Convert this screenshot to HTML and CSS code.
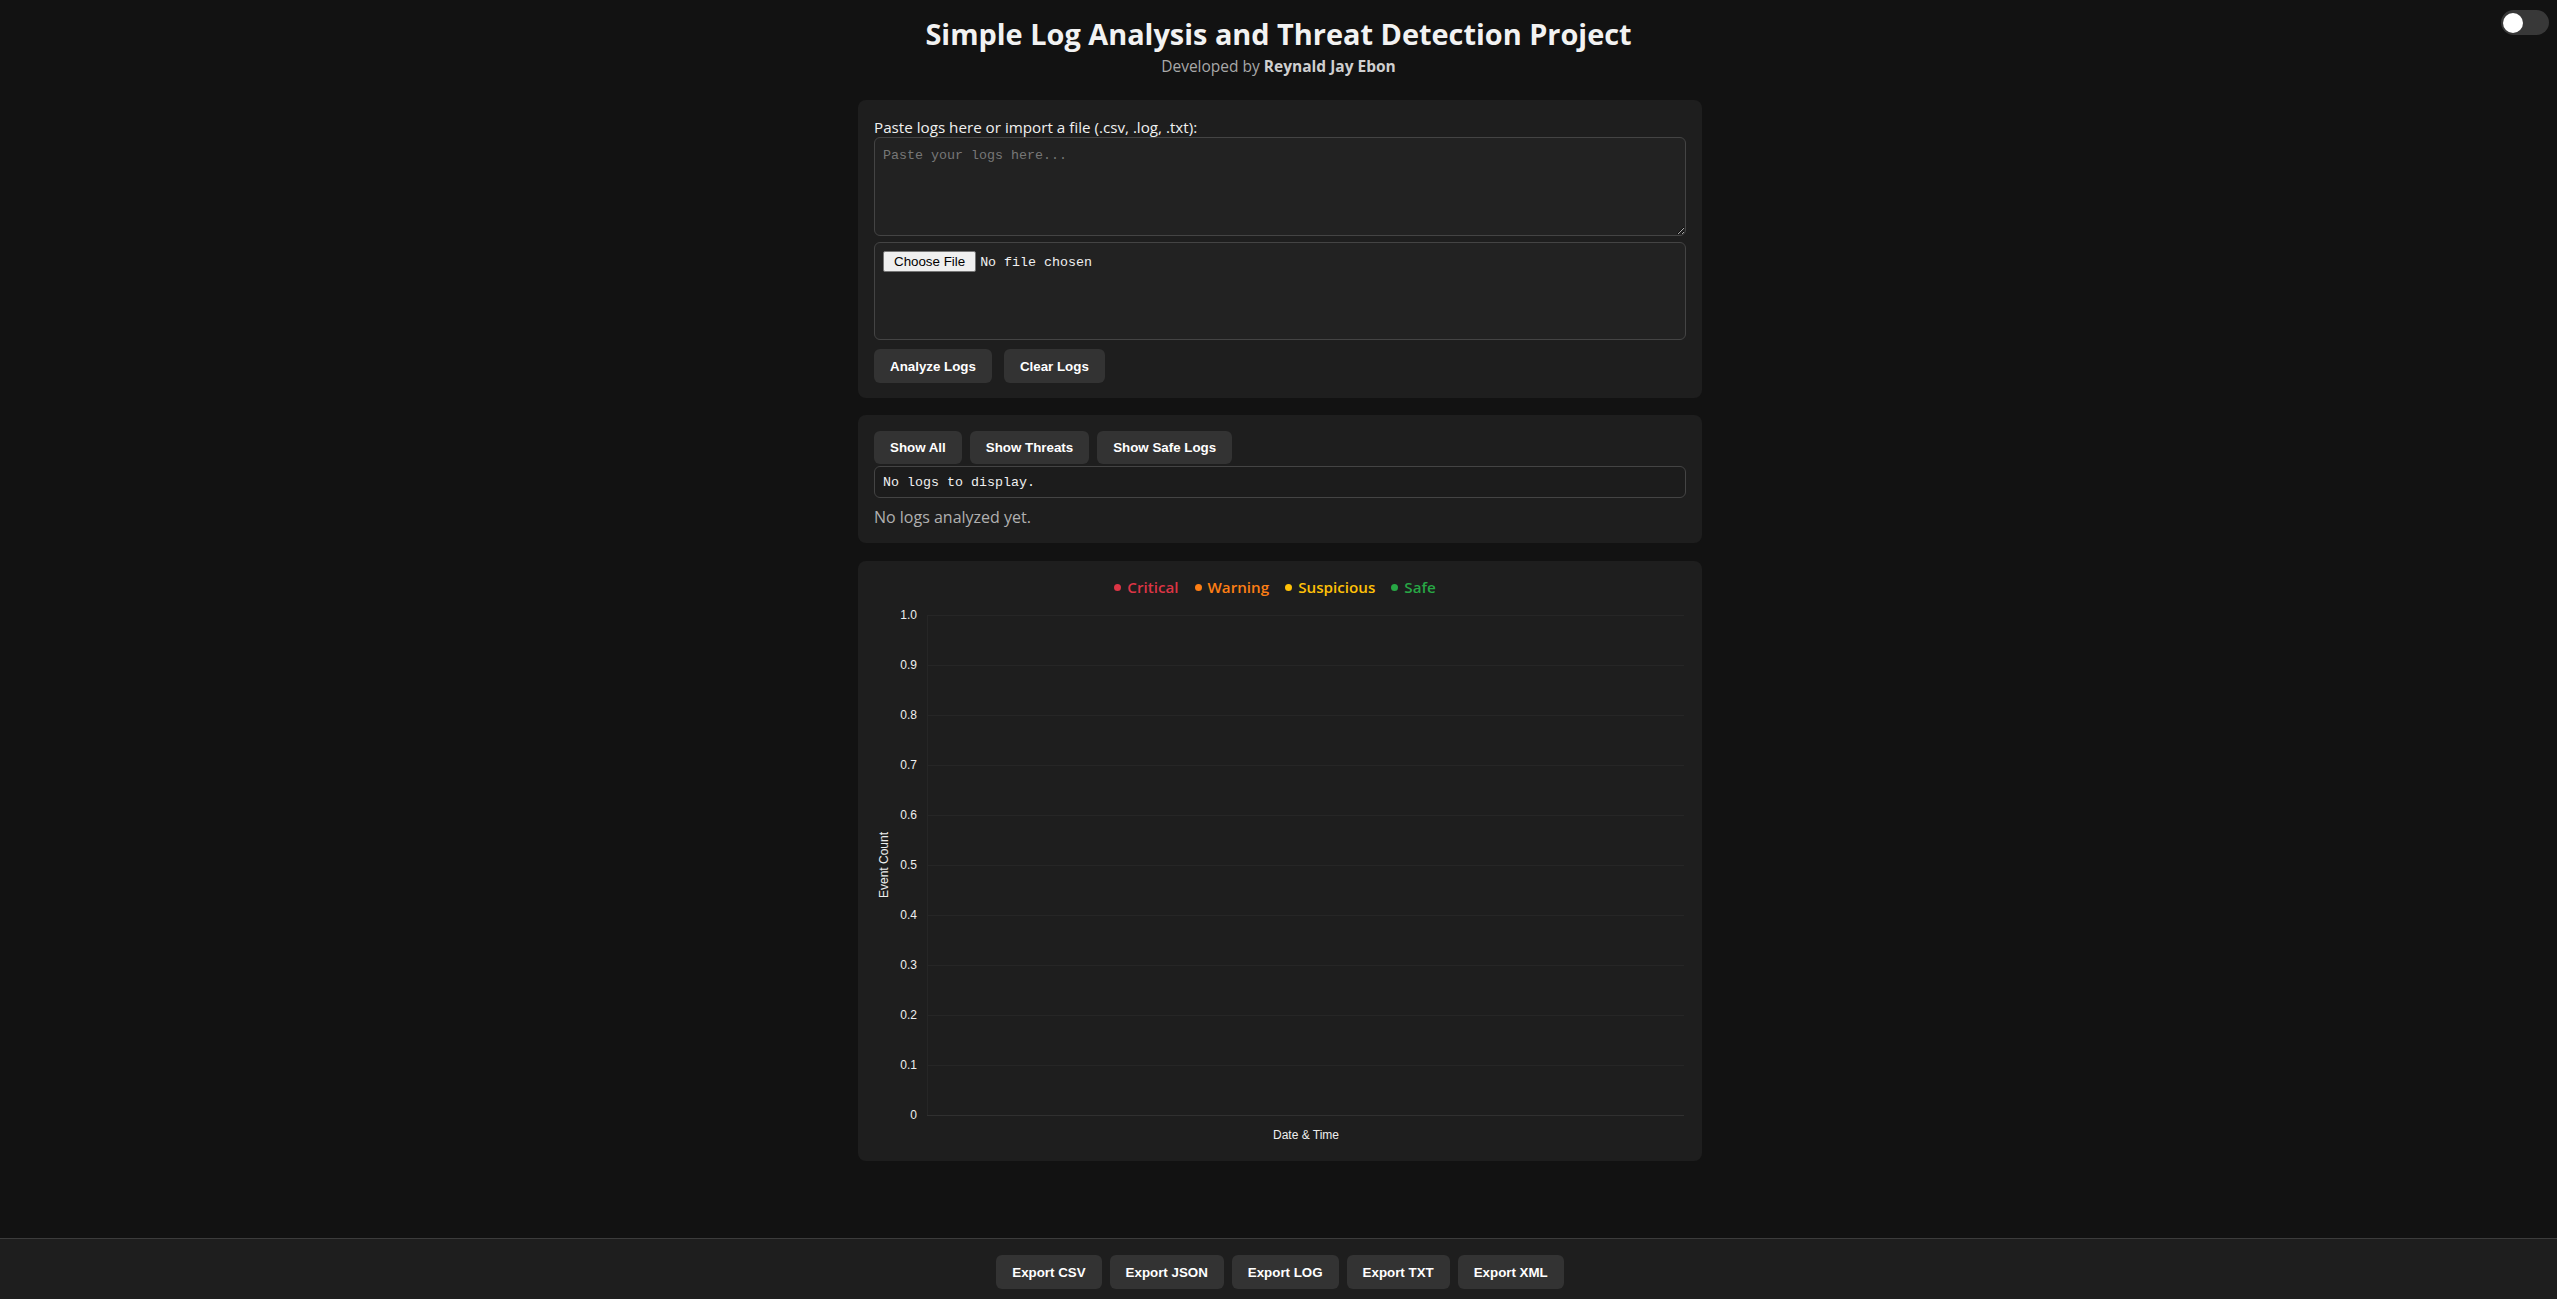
FILE: index.html
```html
<!DOCTYPE html>
<html lang="en">
<head>
<meta charset="utf-8">
<title>Simple Log Analysis and Threat Detection Project</title>
<link rel="stylesheet" href="styles.css">
</head>
<body>
<div class="toggle" role="switch" aria-checked="false"><span class="knob"></span></div>

<header class="header">
  <h1 class="title">Simple Log Analysis and Threat Detection Project</h1>
  <p class="subtitle">Developed by <strong>Reynald Jay Ebon</strong></p>
</header>

<main class="main">
  <section class="card input-card">
    <label class="label" for="logInput">Paste logs here or import a file (.csv, .log, .txt):</label>
    <textarea id="logInput" class="log-input" placeholder="Paste your logs here..."></textarea>
    <div class="file-box"><input type="file" class="file-input" accept=".csv,.log,.txt"></div>
    <div class="btn-row">
      <button class="btn">Analyze Logs</button>
      <button class="btn">Clear Logs</button>
    </div>
  </section>

  <section class="card results-card">
    <div class="filter-row">
      <button class="btn">Show All</button>
      <button class="btn">Show Threats</button>
      <button class="btn">Show Safe Logs</button>
    </div>
    <pre class="log-output">No logs to display.</pre>
    <p class="summary">No logs analyzed yet.</p>
  </section>

  <section class="card chart-card">
    <div class="legend">
      <span class="legend-item critical"><span class="dot"></span>Critical</span>
      <span class="legend-item warning"><span class="dot"></span>Warning</span>
      <span class="legend-item suspicious"><span class="dot"></span>Suspicious</span>
      <span class="legend-item safe"><span class="dot"></span>Safe</span>
    </div>
    <svg class="chart" width="812" height="548" viewBox="0 0 812 548">
      <g class="grid">
        <line x1="53" y1="18" x2="810" y2="18"/>
        <line x1="53" y1="68" x2="810" y2="68"/>
        <line x1="53" y1="118" x2="810" y2="118"/>
        <line x1="53" y1="168" x2="810" y2="168"/>
        <line x1="53" y1="218" x2="810" y2="218"/>
        <line x1="53" y1="268" x2="810" y2="268"/>
        <line x1="53" y1="318" x2="810" y2="318"/>
        <line x1="53" y1="368" x2="810" y2="368"/>
        <line x1="53" y1="418" x2="810" y2="418"/>
        <line x1="53" y1="468" x2="810" y2="468"/>
        <line x1="53" y1="18" x2="53" y2="518"/>
      </g>
      <line class="zero-line" x1="53" y1="518" x2="810" y2="518"/>
      <g class="ticks">
        <text x="43" y="22">1.0</text>
        <text x="43" y="72">0.9</text>
        <text x="43" y="122">0.8</text>
        <text x="43" y="172">0.7</text>
        <text x="43" y="222">0.6</text>
        <text x="43" y="272">0.5</text>
        <text x="43" y="322">0.4</text>
        <text x="43" y="372">0.3</text>
        <text x="43" y="422">0.2</text>
        <text x="43" y="472">0.1</text>
        <text x="43" y="522">0</text>
      </g>
      <text class="axis-title" x="432" y="542">Date &amp; Time</text>
      <text class="axis-title" transform="translate(14 268) rotate(-90)" x="0" y="0">Event Count</text>
    </svg>
  </section>
</main>

<footer class="footer">
  <button class="btn">Export CSV</button>
  <button class="btn">Export JSON</button>
  <button class="btn">Export LOG</button>
  <button class="btn">Export TXT</button>
  <button class="btn">Export XML</button>
</footer>
</body>
</html>
```

FILE: styles.css
```css
html, body {
  margin: 0;
  padding: 0;
}

body {
  background: #121212;
  color: #e6e6e6;
  font-family: "Segoe UI", "Open Sans", "Noto Sans", sans-serif;
  min-height: 100vh;
}

.toggle {
  position: fixed;
  top: 10px;
  right: 8px;
  width: 48px;
  height: 25px;
  border-radius: 13px;
  background: #383838;
}

.knob {
  position: absolute;
  left: 2px;
  top: 2.5px;
  width: 20px;
  height: 20px;
  border-radius: 50%;
  background: #fff;
}

.header {
  text-align: center;
  padding-top: 15px;
}

.title {
  margin: 0;
  font-size: 28.9px;
  font-weight: 700;
  line-height: 38px;
  color: #f2f2f2;
}

.subtitle {
  margin: 3px 0 0;
  font-size: 15.5px;
  line-height: 20px;
  color: #a8a8a8;
}

.subtitle strong {
  color: #cfcfcf;
}

.main {
  width: 844px;
  margin: 24px 0 0 calc(50% - 420.5px);
  display: flex;
  flex-direction: column;
  gap: 17px;
}

.card {
  background: #1e1e1e;
  border-radius: 8px;
  padding: 16px;
}

.input-card {
  padding-top: 17px;
  padding-bottom: 15px;
}

.label {
  display: block;
  font-size: 15.2px;
  line-height: 20px;
  color: #f0f0f0;
}

.log-input {
  display: block;
  width: 100%;
  height: 99px;
  box-sizing: border-box;
  margin: 0;
  padding: 10px 8px 8px;
  background: #222;
  border: 1px solid #444;
  border-radius: 6px;
  color: #e0e0e0;
  font-family: "Liberation Mono", "DejaVu Sans Mono", monospace;
  font-size: 13.333px;
  line-height: 15px;
  resize: vertical;
}

.log-input::placeholder {
  color: #777;
}

.file-box {
  margin-top: 6px;
  height: 98px;
  box-sizing: border-box;
  padding: 6px 8px 8px;
  background: #222;
  border: 1px solid #444;
  border-radius: 6px;
}

.file-input {
  color: #f0f0f0;
  font-family: "Liberation Mono", "DejaVu Sans Mono", monospace;
  font-size: 13.333px;
}

.file-input::file-selector-button {
  font-family: "Liberation Sans", Arial, sans-serif;
  font-size: 13.333px;
  height: 21px;
  padding: 0 10px;
  margin-right: 4px;
  background: #efefef;
  color: #000;
  border: 1px solid #767676;
  border-radius: 2px;
}

.btn-row {
  display: flex;
  gap: 12px;
  margin-top: 9px;
}

.filter-row {
  display: flex;
  gap: 8px;
}

.btn {
  height: 34px;
  padding: 0 16px;
  background: #333;
  color: #fff;
  border: none;
  border-radius: 6px;
  font-family: "Liberation Sans", Arial, sans-serif;
  font-size: 13.333px;
  font-weight: 700;
}

.filter-row .btn {
  height: 33px;
}

.log-output {
  margin: 2px 0 0;
  height: 32px;
  box-sizing: border-box;
  padding: 8px 8px 6px;
  background: #1c1c1c;
  border: 1px solid #444;
  border-radius: 6px;
  color: #f0f0f0;
  font-family: "Liberation Mono", "DejaVu Sans Mono", monospace;
  font-size: 13.333px;
  line-height: 16px;
}

.summary {
  margin: 9px 0 0;
  font-size: 16px;
  line-height: 21px;
  color: #b0b0b0;
}

.results-card {
  padding-bottom: 15px;
}

.chart-card {
  margin-top: 1px;
}

.legend {
  display: flex;
  justify-content: center;
  gap: 16px;
  height: 20px;
  align-items: center;
  padding-right: 10px;
  font-size: 15.2px;
  font-weight: 600;
}

.legend-item {
  display: flex;
  align-items: center;
  gap: 6px;
}

.dot {
  width: 7px;
  height: 7px;
  border-radius: 50%;
  background: currentColor;
}

.critical { color: #dc3545; }
.warning { color: #fd7e14; }
.suspicious { color: #ffc107; }
.safe { color: #28a745; }

.chart {
  display: block;
}

.grid line {
  stroke: #262626;
  stroke-width: 1;
  shape-rendering: crispEdges;
}

.zero-line {
  stroke: #303030;
  stroke-width: 1;
  shape-rendering: crispEdges;
}

.ticks text {
  font-family: "Liberation Sans", Arial, sans-serif;
  font-size: 12px;
  fill: #eeeeee;
  text-anchor: end;
}

.axis-title {
  font-family: "Liberation Sans", Arial, sans-serif;
  font-size: 12px;
  fill: #eeeeee;
  text-anchor: middle;
}

.footer {
  position: fixed;
  left: 0;
  right: 0;
  bottom: 0;
  display: flex;
  justify-content: center;
  gap: 8px;
  padding: 16px 0 10px 3px;
  background: #1e1e1e;
  border-top: 1px solid #3c3c3c;
}
```
